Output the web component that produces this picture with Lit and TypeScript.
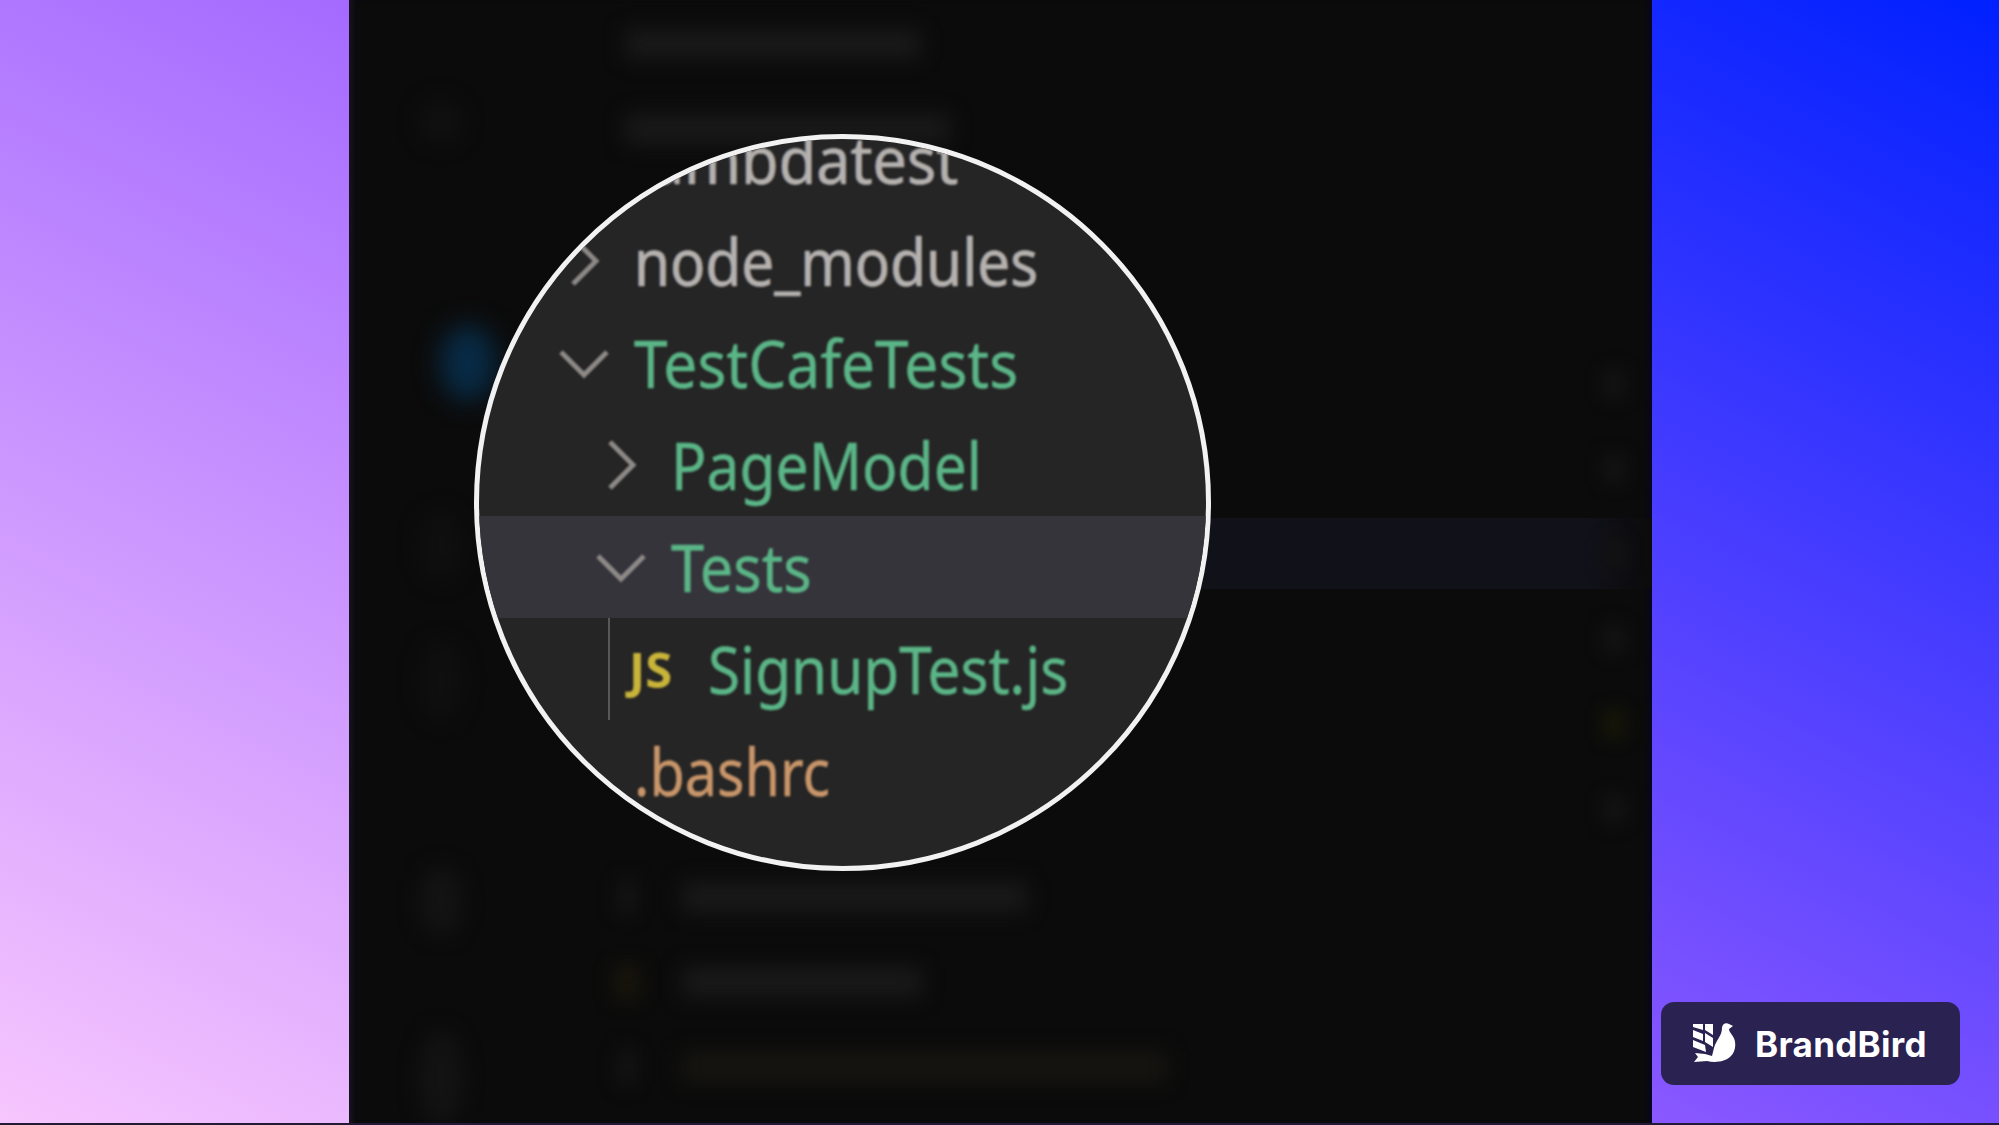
import { html, css, LitElement, svg } from "lit";
import { customElement } from "lit/decorators.js";

const backdropRows = [
  { w: 295, mark: false },
  { w: 325, mark: false },
  { w: 0, mark: false },
  { w: 0, mark: false },
  { w: 0, mark: true },
  { w: 0, mark: true },
  { w: 0, mark: true, active: true },
  { w: 0, mark: true },
  { w: 0, mark: true, tone: "olive" },
  { w: 0, mark: true },
  { w: 345, mark: false, icon: "grey" },
  { w: 240, mark: false, icon: "olive" },
  { w: 485, mark: false, icon: "grey", tone: "warm" },
];

// fit narrows each name to the width it has in the picture
const lensRows = [
  { name: "lambdatest", tone: "plain", depth: 0, icon: "none", fit: 0.925 },
  { name: "node_modules", tone: "plain", depth: 0, icon: "right", fit: 0.885 },
  { name: "TestCafeTests", tone: "green", depth: 0, icon: "down", fit: 0.915 },
  { name: "PageModel", tone: "green", depth: 1, icon: "right", fit: 0.89 },
  { name: "Tests", tone: "green", depth: 1, icon: "down", fit: 0.9, active: true },
  { name: "SignupTest.js", tone: "green", depth: 2, icon: "js", fit: 0.885 },
  { name: ".bashrc", tone: "orange", depth: 0, icon: "none", fit: 0.87 },
];

const birdLogo = svg`
  <path d="M8 8h10v6l-10-3zM8 14l10 4v7l-10-4zM8 24l12 5 1 7-13-5z" />
  <path d="M20 8h8v11l-8-5zM20 17l8 5v9l-8-5z" />
  <path d="M37 12c0-4 4-6 7-4l4 2-4 3c0 2 1 3 3 6 5 6 4 16-1 21-6 6-16 7-24 5l-13 1 4-5-3-4 10 1 7 2 2-8c2-8 8-12 8-20z" />
`;

@customElement("app-root")
export class AppRoot extends LitElement {
  static styles = css`
    :host {
      display: flex;
      flex-direction: column;
      width: 1999px;
      height: 1125px;
      overflow: hidden;
      background: #221a36;
    }
    .stage {
      display: flex;
      height: 1123px;
    }
    .strip-left {
      width: 349px;
      background: linear-gradient(27deg, #f6c6fe 0%, #a46aff 100%);
    }
    .strip-right {
      flex: 1;
      display: flex;
      justify-content: center;
      align-items: flex-end;
      padding: 0 39px 38px 9px;
      background: linear-gradient(27deg, #8a58ff 0%, #0020ff 100%);
    }

    .panel {
      position: relative;
      width: 1303px;
      display: flex;
      background: #0b0b0b;
      overflow: hidden;
      box-shadow: inset 6px 0 4px -2px #17131f, inset -6px 0 4px -2px #08061e;
    }
    .sidebar {
      width: 251px;
      padding: 100px 0 0 70px;
      box-sizing: border-box;
      display: flex;
      flex-direction: column;
    }
    .side-item {
      width: 44px;
      height: 44px;
      border-radius: 50%;
      background: #101010;
      filter: blur(10px);
      flex: none;
    }
    .side-item.blue {
      background: #082b46;
      margin-top: 181px;
      margin-left: 21px;
      width: 56px;
      height: 76px;
      filter: blur(13px);
    }
    .side-item.dim {
      margin-top: 110px;
      height: 70px;
      background: #0f0f0f;
    }
    .side-item.dim + .side-item.dim {
      margin-top: 60px;
      height: 80px;
    }
    .side-item.low {
      height: 70px;
      margin-top: 145px;
      background: #131313;
    }
    .side-item.tall {
      height: 96px;
      margin-top: 94px;
      background: #131313;
    }
    .tree {
      flex: 1;
      padding-top: 8px;
    }
    .back-row {
      height: 71px;
      margin-bottom: 14px;
      display: flex;
      align-items: center;
      padding-right: 27px;
    }
    .back-row.active {
      background: linear-gradient(90deg, #11111a 94%, #0b0b0b 100%);
    }
    .back-row.low {
      position: relative;
      top: 3px;
    }
    .back-icon {
      width: 16px;
      height: 36px;
      margin: 0 47px 0 19px;
      background: #151515;
      filter: blur(9px);
    }
    .back-icon.olive {
      background: #17150b;
      width: 26px;
      margin: 0 42px 0 14px;
    }
    .back-label {
      height: 30px;
      margin-left: 25px;
      background: #191919;
      filter: blur(10px);
    }
    .back-icon + .back-label {
      margin-left: 0;
    }
    .back-label.warm {
      background: #161510;
    }
    .mark {
      width: 22px;
      height: 30px;
      margin-left: auto;
      background: #131313;
      filter: blur(8px);
    }
    .mark.olive {
      background: #171608;
    }

    .lens {
      position: absolute;
      left: 125px;
      top: 134px;
      width: 737px;
      height: 737px;
      box-sizing: border-box;
      border: 5px solid #f2f2f2;
      border-radius: 50%;
      background: #252525;
      overflow: hidden;
      filter: blur(0.7px);
    }
    .rows {
      margin-top: -31px;
    }
    .row {
      height: 102px;
      display: flex;
      align-items: center;
      font-family: "Noto Sans", sans-serif;
      font-size: 66px;
      line-height: 102px;
      white-space: nowrap;
    }
    .row.active {
      background: #35343b;
    }
    .row .label {
      filter: blur(1px);
      position: relative;
      top: -1px;
      transform-origin: left center;
      -webkit-text-stroke: 0.5px currentColor;
    }
    .plain {
      color: #b4b1ae;
      text-shadow: -1px 0 rgba(90, 140, 230, 0.45), 1px 0 rgba(220, 140, 70, 0.4);
    }
    .green {
      color: #5bb587;
    }
    .orange {
      color: #c9966a;
    }
    .chevron {
      width: 50px;
      height: 50px;
      margin-right: 25px;
      flex: none;
      fill: none;
      stroke: #8e8a88;
      stroke-width: 5;
      filter: blur(0.8px);
    }
    .spacer {
      width: 75px;
      flex: none;
    }
    .guide {
      align-self: stretch;
      width: 2px;
      margin-right: 19px;
      background: #58585a;
    }
    .js {
      width: 54px;
      margin-right: 25px;
      flex: none;
      font-size: 49px;
      font-weight: 700;
      color: #c9b43a;
      filter: blur(0.8px);
      font-family: "Noto Sans", sans-serif;
    }

    .badge {
      width: 299px;
      height: 83px;
      box-sizing: border-box;
      display: flex;
      align-items: center;
      gap: 18px;
      padding-left: 26px;
      border-radius: 13px;
      background: #2a2352;
      color: #fff;
      font-family: Inter, sans-serif;
      font-size: 35px;
      font-weight: 700;
      letter-spacing: 0.3px;
    }
    .badge svg {
      width: 60px;
      height: 55px;
      margin: 0 -8px 0 -2px;
      fill: #fff;
      flex: none;
    }
  `;

  renderIcon(icon: string) {
    if (icon === "right") {
      return html`<svg class="chevron" viewBox="0 0 50 50">
        <path d="M14 2l23 23-23 23" />
      </svg>`;
    }
    if (icon === "down") {
      return html`<svg class="chevron" viewBox="0 0 50 50">
        <path d="M2 14l23 23 23-23" />
      </svg>`;
    }
    if (icon === "js") {
      return html`<span class="guide"></span><span class="js">JS</span>`;
    }
    return html`<span class="spacer"></span>`;
  }

  render() {
    return html`
      <div class="stage">
        <div class="strip-left"></div>
        <div class="panel">
          <div class="sidebar">
            <div class="side-item"></div>
            <div class="side-item blue"></div>
            <div class="side-item dim"></div>
            <div class="side-item dim"></div>
            <div class="side-item low"></div>
            <div class="side-item tall"></div>
          </div>
          <div class="tree">
            ${backdropRows.map(
              (row, index) => html`<div
                class="back-row ${row.active ? "active" : ""} ${index > 9 ? "low" : ""}"
              >
                ${row.icon
                  ? html`<span class="back-icon ${row.icon}"></span>`
                  : ""}
                ${row.w
                  ? html`<span
                      class="back-label ${row.tone ?? ""}"
                      style="width: ${row.w}px"
                    ></span>`
                  : ""}
                ${row.mark
                  ? html`<span class="mark ${row.tone ?? ""}"></span>`
                  : ""}
              </div>`
            )}
          </div>
          <div class="lens">
            <div class="rows">
              ${lensRows.map(
                (row) => html`<div
                  class="row ${row.active ? "active" : ""}"
                  style="padding-left: ${row.icon === "js"
                    ? 129
                    : 80 + row.depth * 37}px"
                >
                  ${this.renderIcon(row.icon)}
                  <span
                    class="label ${row.tone}"
                    style="transform: scaleX(${row.fit})"
                    >${row.name}</span
                  >
                </div>`
              )}
            </div>
          </div>
        </div>
        <div class="strip-right">
          <div class="badge">
            <svg viewBox="0 0 60 55">${birdLogo}</svg>
            <span>BrandBird</span>
          </div>
        </div>
      </div>
    `;
  }
}
